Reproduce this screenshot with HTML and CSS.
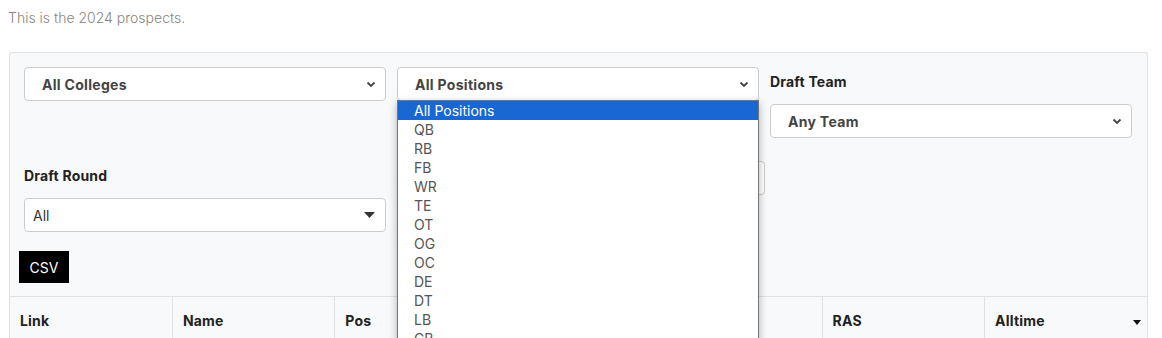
FILE: index.html
```html
<!DOCTYPE html>
<html lang="en">
<head>
    <meta charset="UTF-8">
    <meta name="viewport" content="width=device-width, initial-scale=1.0">
    <title>2024 Prospects</title>
    <link rel="stylesheet" href="styles.css">
</head>
<body>
    <p class="intro">This is the 2024 prospects.</p>

    <div class="panel">
        <div class="filters">
            <div class="filter">
                <div class="select">
                    <span>All Colleges</span>
                    <svg class="chevron" width="10" height="7" viewBox="0 0 10 7"><path d="M1.5 1.5 L5 5 L8.5 1.5" fill="none" stroke="#444" stroke-width="1.8"/></svg>
                </div>
            </div>
            <div class="filter">
                <div class="select">
                    <span>All Positions</span>
                    <svg class="chevron" width="10" height="7" viewBox="0 0 10 7"><path d="M1.5 1.5 L5 5 L8.5 1.5" fill="none" stroke="#444" stroke-width="1.8"/></svg>
                </div>
                <ul class="options">
                    <li class="active">All Positions</li>
                    <li>QB</li>
                    <li>RB</li>
                    <li>FB</li>
                    <li>WR</li>
                    <li>TE</li>
                    <li>OT</li>
                    <li>OG</li>
                    <li>OC</li>
                    <li>DE</li>
                    <li>DT</li>
                    <li>LB</li>
                    <li>CB</li>
                </ul>
            </div>
            <div class="filter">
                <label>Draft Team</label>
                <div class="select">
                    <span>Any Team</span>
                    <svg class="chevron" width="10" height="7" viewBox="0 0 10 7"><path d="M1.5 1.5 L5 5 L8.5 1.5" fill="none" stroke="#444" stroke-width="1.8"/></svg>
                </div>
            </div>
            <div class="filter">
                <label>Draft Round</label>
                <div class="select plain">
                    <span>All</span>
                    <svg class="caret" width="11" height="6" viewBox="0 0 11 6"><path d="M0 0 H11 L5.5 6 Z" fill="#333"/></svg>
                </div>
            </div>
            <div class="filter">
                <div class="search"></div>
            </div>
        </div>

        <div class="toolbar">
            <button class="csv">CSV</button>
        </div>

        <table class="prospects">
            <thead>
                <tr>
                    <th>Link</th>
                    <th>Name</th>
                    <th>Pos</th>
                    <th>College</th>
                    <th>Year</th>
                    <th>RAS</th>
                    <th class="sorted">Alltime
                        <svg class="sort" width="8" height="5" viewBox="0 0 8 5"><path d="M0 0 H8 L4 5 Z" fill="#111"/></svg>
                    </th>
                </tr>
            </thead>
        </table>
    </div>
</body>
</html>
```

FILE: styles.css
```css
body {
    margin: 8px;
    font-family: Inter, "Open Sans", sans-serif;
    font-size: 14px;
    color: #333;
    background-color: #fff;
}
.intro {
    margin: 0;
    line-height: 20px;
    font-weight: 300;
    color: #8a8580;
}
.panel {
    margin: 24px 6px 0 1px;
    padding-top: 14px;
    background-color: #f8f9fa;
    border: 1px solid #dfe1e3;
    border-bottom: none;
    border-radius: 3px 3px 0 0;
    height: 278px;
    overflow: hidden;
}
.filters {
    display: flex;
    flex-wrap: wrap;
    column-gap: 11px;
    row-gap: 23px;
    padding: 0 14px;
}
.filter {
    width: 362px;
    position: relative;
}
.filter label {
    display: block;
    padding-top: 5px;
    margin-bottom: 12px;
    line-height: 20px;
    font-weight: 700;
    letter-spacing: 0.2px;
    color: #222;
}
.select {
    height: 32px;
    display: flex;
    align-items: center;
    justify-content: space-between;
    padding: 0 9px 0 17px;
    background-color: #fff;
    border: 1px solid #ccc;
    border-radius: 4px;
    font-weight: 700;
    letter-spacing: 0.3px;
    color: #444;
}
.select.plain {
    padding: 0 10px 0 8px;
    font-weight: 400;
    letter-spacing: 0;
    color: #333;
}
.search {
    width: 366px;
    height: 32px;
    background-color: #fff;
    border: 1px solid #ccc;
    border-radius: 4px;
}
.options {
    position: absolute;
    top: 33px;
    left: 0;
    width: 360px;
    margin: 0;
    padding: 0;
    list-style: none;
    background-color: #fff;
    border: 1px solid #767676;
    box-shadow: 0 3px 8px rgba(0,0,0,0.3);
    z-index: 10;
}
.options li {
    height: 19px;
    line-height: 19px;
    padding-left: 16px;
    color: #555;
}
.options li.active {
    background-color: #1967d2;
    color: #fff;
}
.toolbar {
    padding: 19px 0 13px 9px;
}
.csv {
    width: 50px;
    height: 32px;
    padding: 0;
    background-color: #000;
    color: #fff;
    border: none;
    font-family: inherit;
    font-size: 14px;
}
.prospects {
    width: 100%;
    table-layout: fixed;
    border-collapse: collapse;
    border-top: 1px solid #dfe1e3;
}
.prospects th {
    padding: 14px 10px;
    line-height: 20px;
    text-align: left;
    font-weight: 700;
    letter-spacing: 0.2px;
    color: #222;
    border-left: 1px solid #dfe1e3;
}
.prospects th:first-child {
    border-left: none;
}
.prospects th.sorted {
    position: relative;
}
.sort {
    position: absolute;
    right: 6px;
    top: 23px;
}
```
